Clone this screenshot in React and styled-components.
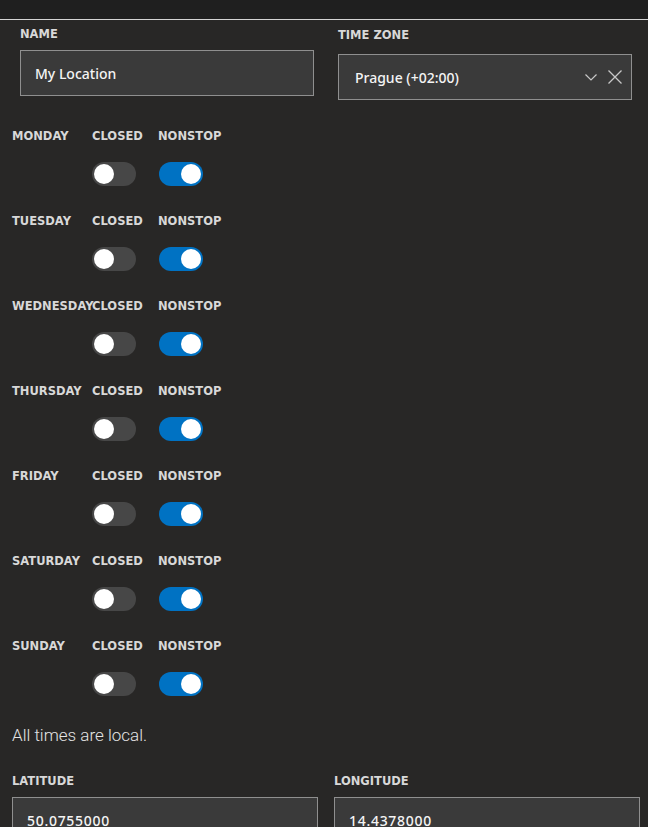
import React, { useState } from "react";
import styled, { createGlobalStyle } from "styled-components";

const GlobalStyle = createGlobalStyle`
  * { box-sizing: border-box; }
  html, body {
    margin: 0;
    padding: 0;
    background: #282726;
  }
  body {
    font-family: "Noto Sans", sans-serif;
    color: #f2f2f2;
  }
`;

const Page = styled.div`
  min-height: 827px;
  background: #282726;
`;

const TopBar = styled.div`
  height: 20px;
  background: #1f1f1f;
  border-bottom: 1px solid #d4d4d4;
`;

const FieldRow = styled.div`
  display: grid;
  grid-template-columns: 1fr 1fr;
  column-gap: ${(p) => p.$gap}px;
  padding: ${(p) => p.$pad};
`;

const Field = styled.div`
  display: flex;
  flex-direction: column;
  padding-top: ${(p) => p.$nudge || 0}px;
`;

const Label = styled.div`
  font-family: "DejaVu Sans", sans-serif;
  font-weight: 700;
  font-size: 11.5px;
  line-height: 16px;
  color: #d8d8d8;
  white-space: nowrap;
`;

const TextInput = styled.input`
  margin-top: 8px;
  height: 46px;
  width: 100%;
  padding: 0 14px;
  background: #3a3a3a;
  border: 1px solid #8f8f8f;
  border-radius: 0;
  color: #f4f4f4;
  font-family: "Noto Sans", sans-serif;
  font-size: 14px;
  font-weight: 500;
  letter-spacing: ${(p) => (p.$numeric ? "0.7px" : "normal")};
  outline: none;
`;

const Select = styled.div`
  margin-top: 11px;
  height: 46px;
  display: flex;
  align-items: center;
  padding: 0 4px 0 16px;
  background: #3a3a3a;
  border: 1px solid #8f8f8f;
  color: #f4f4f4;
  font-size: 14px;
  font-weight: 500;
`;

const SelectValue = styled.span`
  flex: 1;
`;

const IconButton = styled.span`
  display: inline-flex;
  align-items: center;
  justify-content: center;
  width: 24px;
  height: 24px;
  color: #c8c8c8;
`;

const Schedule = styled.div`
  padding: 28px 0 0 12px;
`;

const DayBlock = styled.div`
  display: grid;
  grid-template-columns: 80px 66px auto;
  grid-template-rows: 16px 24px;
  row-gap: 18px;
  margin-bottom: 27px;
`;

const Track = styled.button`
  position: relative;
  width: 44px;
  height: 24px;
  padding: 0;
  border: none;
  border-radius: 12px;
  background: ${(p) => (p.$on ? "#0072c3" : "#474747")};
  cursor: pointer;
`;

const Knob = styled.span`
  position: absolute;
  top: 2px;
  left: ${(p) => (p.$on ? 22 : 2)}px;
  width: 20px;
  height: 20px;
  border-radius: 50%;
  background: #ffffff;
`;

const Note = styled.p`
  margin: 0 0 26px 12px;
  font-family: Roboto, sans-serif;
  font-weight: 300;
  font-size: 17px;
  line-height: 24px;
  color: #e4e4e4;
`;

const Toggle = ({ on, onChange, offset }) => (
  <Track role="switch" aria-checked={on} $on={on} onClick={onChange} style={offset ? { marginLeft: offset } : undefined}>
    <Knob $on={on} />
  </Track>
);

const Chevron = () => (
  <svg width="14" height="14" viewBox="0 0 14 14" fill="none">
    <path d="M1.5 4.5 L7 10 L12.5 4.5" stroke="currentColor" strokeWidth="1.2" />
  </svg>
);

const Cross = () => (
  <svg width="16" height="16" viewBox="0 0 16 16" fill="none">
    <path d="M1.5 1.5 L14.5 14.5 M14.5 1.5 L1.5 14.5" stroke="currentColor" strokeWidth="1.3" />
  </svg>
);

const DAYS = ["MONDAY", "TUESDAY", "WEDNESDAY", "THURSDAY", "FRIDAY", "SATURDAY", "SUNDAY"];

export default function App() {
  const [hours, setHours] = useState(
    DAYS.map(() => ({ closed: false, nonstop: true }))
  );

  const flip = (i, key) =>
    setHours((h) => h.map((d, j) => (j === i ? { ...d, [key]: !d[key] } : d)));

  return (
    <Page>
      <GlobalStyle />
      <TopBar />
      <FieldRow $gap={24} $pad="6px 16px 0 20px">
        <Field>
          <Label>NAME</Label>
          <TextInput defaultValue="My Location" />
        </Field>
        <Field $nudge={1}>
          <Label>TIME ZONE</Label>
          <Select>
            <SelectValue>Prague (+02:00)</SelectValue>
            <IconButton><Chevron /></IconButton>
            <IconButton><Cross /></IconButton>
          </Select>
        </Field>
      </FieldRow>

      <Schedule>
        {DAYS.map((day, i) => (
          <DayBlock key={day}>
            <Label>{day}</Label>
            <Label>CLOSED</Label>
            <Label>NONSTOP</Label>
            <span />
            <div>
              <Toggle on={hours[i].closed} onChange={() => flip(i, "closed")} />
            </div>
            <div>
              <Toggle on={hours[i].nonstop} onChange={() => flip(i, "nonstop")} offset={1} />
            </div>
          </DayBlock>
        ))}
      </Schedule>

      <Note>All times are local.</Note>

      <FieldRow $gap={16} $pad="0 8px 0 12px">
        <Field>
          <Label>LATITUDE</Label>
          <TextInput $numeric defaultValue="50.0755000" />
        </Field>
        <Field>
          <Label>LONGITUDE</Label>
          <TextInput $numeric defaultValue="14.4378000" />
        </Field>
      </FieldRow>
    </Page>
  );
}
